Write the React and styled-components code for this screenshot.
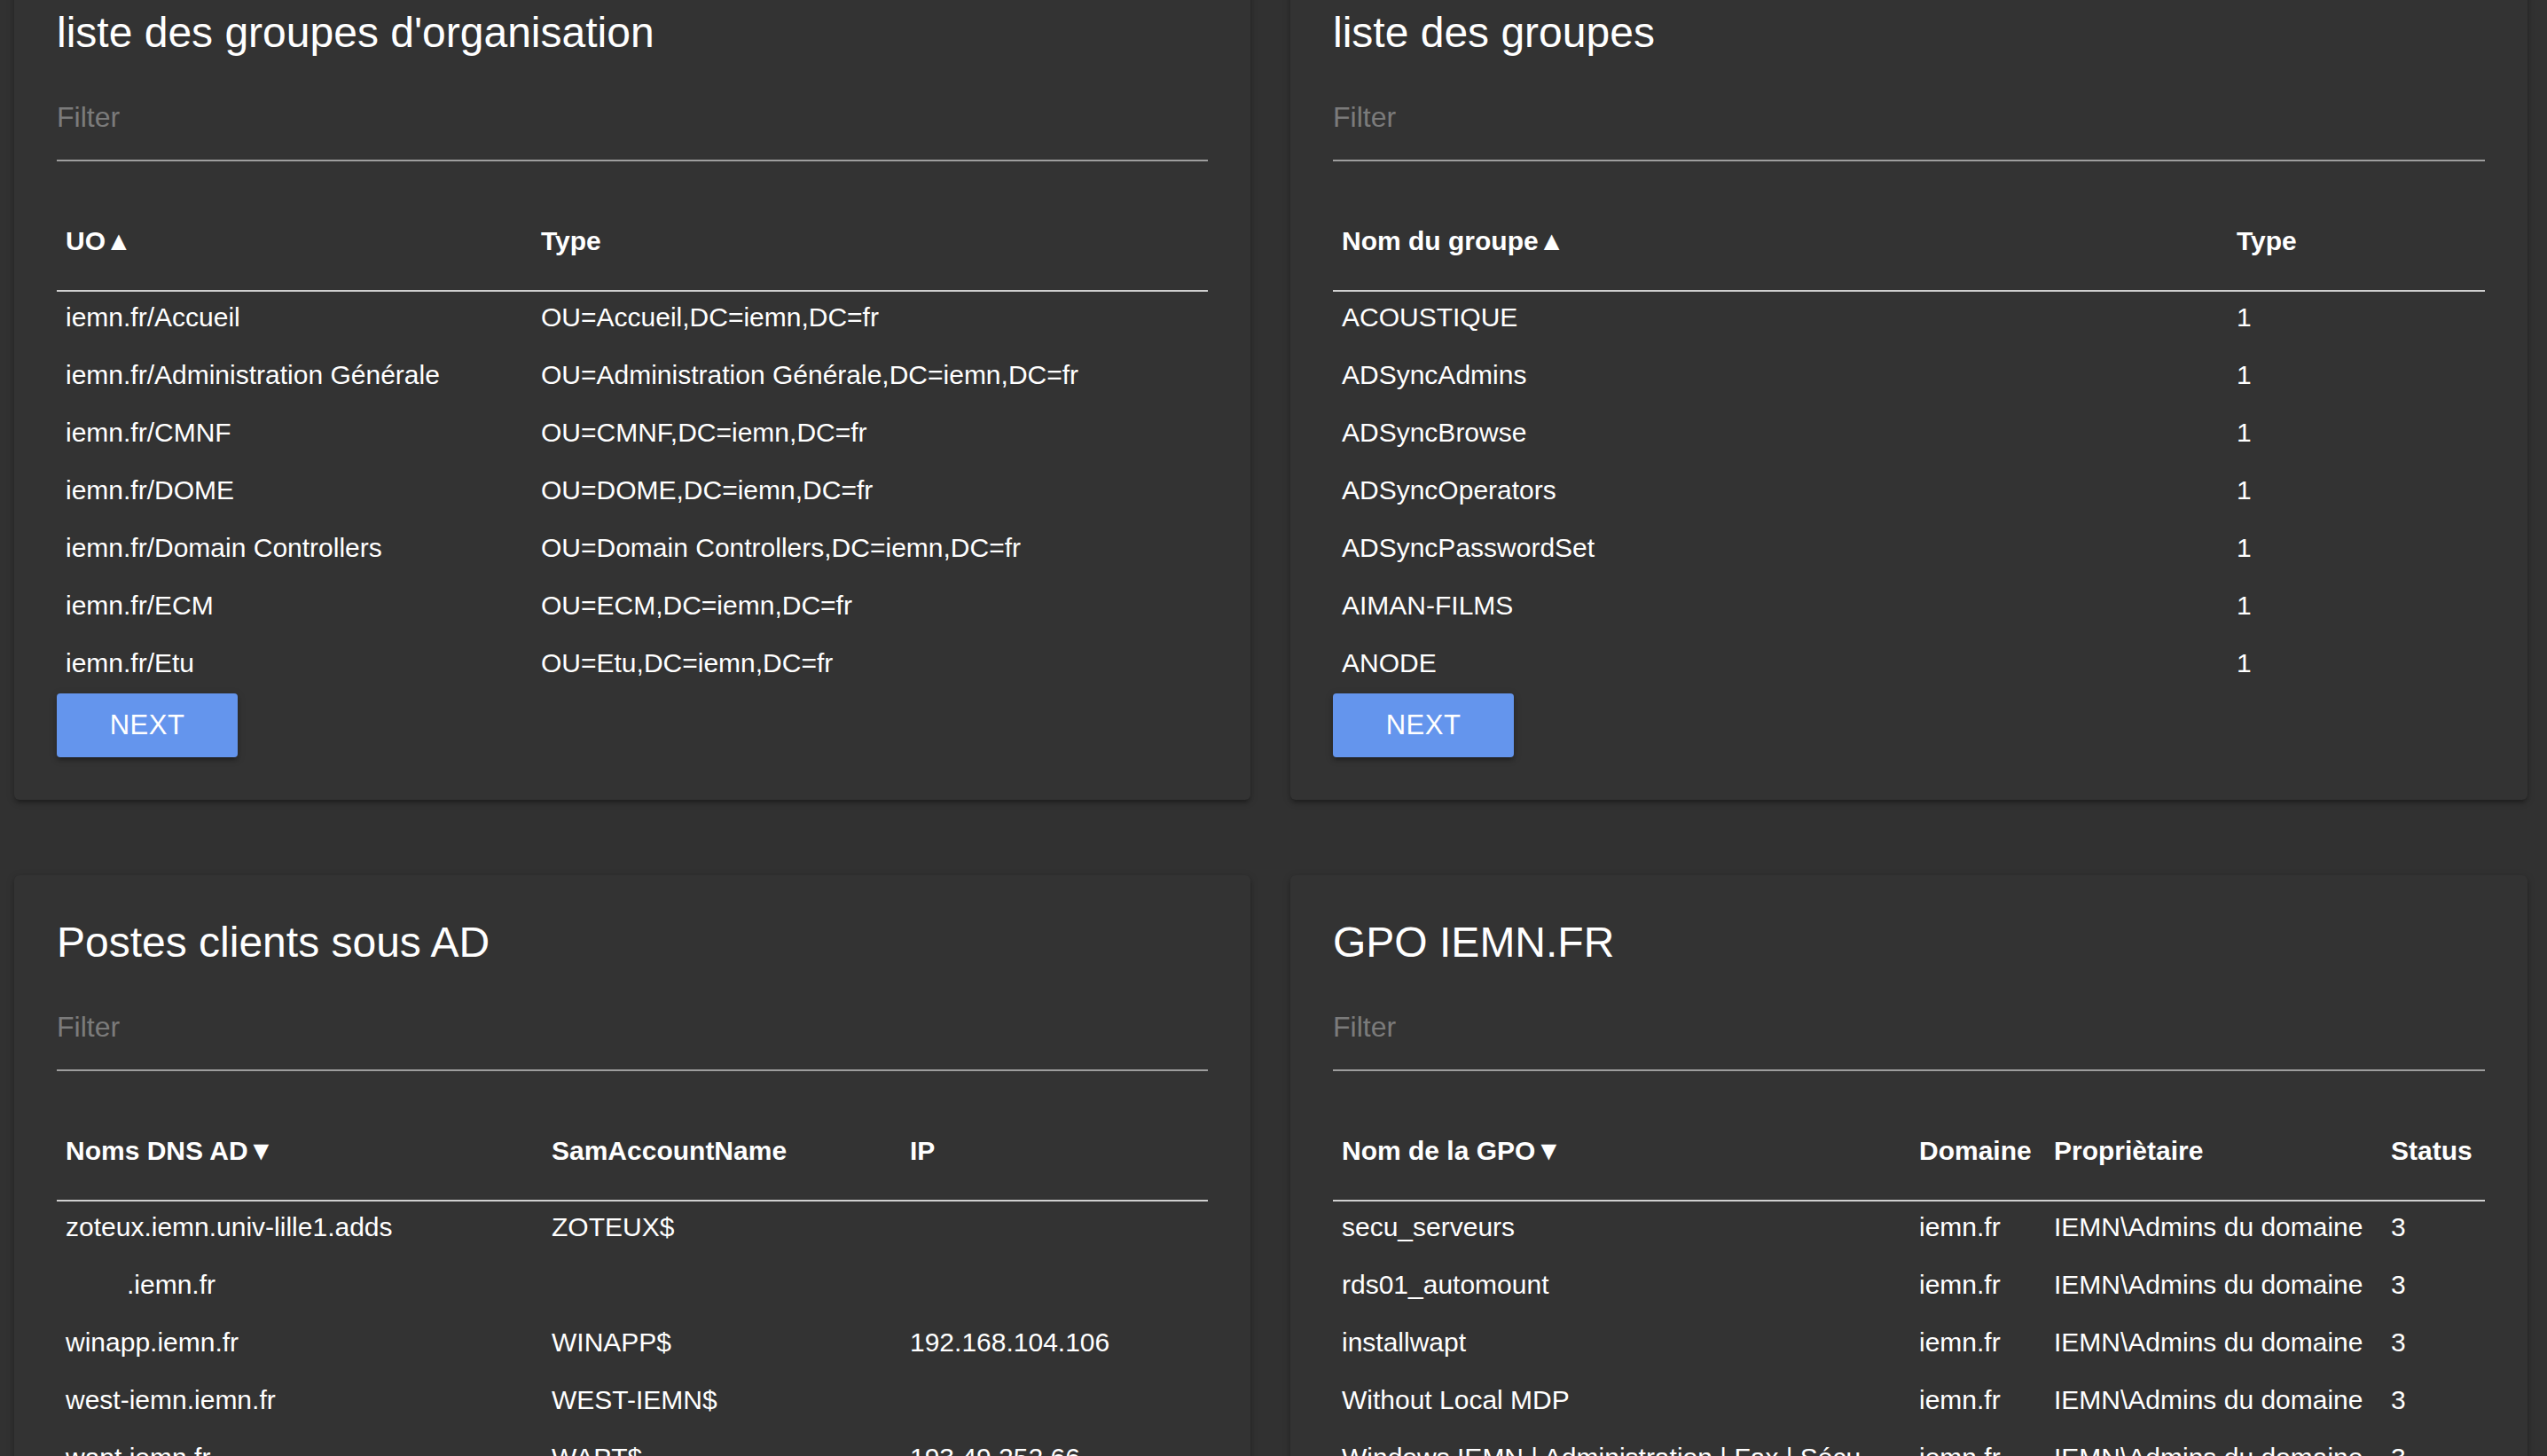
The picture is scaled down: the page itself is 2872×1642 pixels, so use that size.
import React from "react";
import styled, { createGlobalStyle } from "styled-components";

const GlobalStyle = createGlobalStyle`
  html, body {
    margin: 0;
    padding: 0;
    background: #313131;
    font-family: "Liberation Sans", Arial, Helvetica, sans-serif;
    color: #ffffff;
    overflow: hidden;
  }
  * { box-sizing: border-box; }
`;

const Page = styled.main`
  display: grid;
  grid-template-columns: 1394px 1395px;
  column-gap: 45px;
  row-gap: 85px;
  padding: 0 22px 0 16px;
  margin-top: -39px;
  align-items: start;
`;

const Card = styled.section`
  background: #333333;
  border-radius: 6px;
  padding: 44px 48px 48px 48px;
  box-shadow: 0 4px 4px 0 rgba(0, 0, 0, 0.14), 0 6px 2px -4px rgba(0, 0, 0, 0.12),
    0 2px 10px 0 rgba(0, 0, 0, 0.2);
`;

const CardTitle = styled.h2`
  margin: 0 0 15px 0;
  font-size: 48px;
  line-height: 64px;
  font-weight: 300;
  color: #ffffff;
`;

const FilterInput = styled.input`
  display: block;
  width: 100%;
  height: 98px;
  margin: 0;
  padding: 0;
  border: none;
  border-bottom: 2px solid #9e9e9e;
  background: transparent;
  color: #ffffff;
  font-family: inherit;
  font-size: 32px;
  outline: none;
  &::placeholder {
    color: #7b7b7b;
  }
`;

const Table = styled.table`
  width: 100%;
  margin-top: 40px;
  border-collapse: collapse;
  table-layout: fixed;
  font-size: 30px;
`;

const HeadCell = styled.th`
  width: ${(p) => (p.$w ? `${p.$w}px` : "auto")};
  text-align: left;
  font-weight: 700;
  padding: 27px 10px 33px 10px;
  line-height: 45px;
  border-bottom: 2px solid #d0d0d0;
  color: #ffffff;
  white-space: nowrap;
`;

const Cell = styled.td`
  padding: 6px 10px 14px ${(p) => (p.$indent ? "79px" : "10px")};
  line-height: 45px;
  color: #ffffff;
  vertical-align: top;
`;

const Row = styled.tr``;

const NextButton = styled.button`
  display: block;
  width: 204px;
  height: 72px;
  margin-top: -2px;
  border: none;
  border-radius: 4px;
  background: #6495ed;
  color: #ffffff;
  font-family: inherit;
  font-size: 31px;
  letter-spacing: 0.5px;
  text-transform: uppercase;
  line-height: 70px;
  padding: 0;
  box-shadow: 0 4px 4px 0 rgba(0, 0, 0, 0.14), 0 6px 2px -4px rgba(0, 0, 0, 0.12),
    0 2px 10px 0 rgba(0, 0, 0, 0.2);
  cursor: pointer;
`;

const ouRows = [
  ["iemn.fr/Accueil", "OU=Accueil,DC=iemn,DC=fr"],
  ["iemn.fr/Administration Générale", "OU=Administration Générale,DC=iemn,DC=fr"],
  ["iemn.fr/CMNF", "OU=CMNF,DC=iemn,DC=fr"],
  ["iemn.fr/DOME", "OU=DOME,DC=iemn,DC=fr"],
  ["iemn.fr/Domain Controllers", "OU=Domain Controllers,DC=iemn,DC=fr"],
  ["iemn.fr/ECM", "OU=ECM,DC=iemn,DC=fr"],
  ["iemn.fr/Etu", "OU=Etu,DC=iemn,DC=fr"],
];

const groupRows = [
  ["ACOUSTIQUE", "1"],
  ["ADSyncAdmins", "1"],
  ["ADSyncBrowse", "1"],
  ["ADSyncOperators", "1"],
  ["ADSyncPasswordSet", "1"],
  ["AIMAN-FILMS", "1"],
  ["ANODE", "1"],
];

const hostRows = [
  { cells: ["zoteux.iemn.univ-lille1.adds", "ZOTEUX$", ""] },
  { cells: [".iemn.fr", "", ""], indent: true },
  { cells: ["winapp.iemn.fr", "WINAPP$", "192.168.104.106"] },
  { cells: ["west-iemn.iemn.fr", "WEST-IEMN$", ""] },
  { cells: ["wapt.iemn.fr", "WAPT$", "193.49.252.66"] },
  { cells: ["vm-test.iemn.fr", "VM-TEST$", ""] },
];

const gpoRows = [
  ["secu_serveurs", "iemn.fr", "IEMN\\Admins du domaine", "3"],
  ["rds01_automount", "iemn.fr", "IEMN\\Admins du domaine", "3"],
  ["installwapt", "iemn.fr", "IEMN\\Admins du domaine", "3"],
  ["Without Local MDP", "iemn.fr", "IEMN\\Admins du domaine", "3"],
  ["Windows IEMN | Administration | Fax | Sécu", "iemn.fr", "IEMN\\Admins du domaine", "3"],
];

function DataCard({ title, columns, rows, withNext }) {
  return (
    <Card>
      <CardTitle>{title}</CardTitle>
      <FilterInput placeholder="Filter" />
      <Table>
        <thead>
          <Row>
            {columns.map((c, i) => (
              <HeadCell key={i} $w={c.w}>
                {c.label}
              </HeadCell>
            ))}
          </Row>
        </thead>
        <tbody>
          {rows.map((r, i) => {
            const cells = Array.isArray(r) ? r : r.cells;
            return (
              <Row key={i}>
                {cells.map((v, j) => (
                  <Cell key={j} $indent={j === 0 && r.indent}>
                    {v}
                  </Cell>
                ))}
              </Row>
            );
          })}
        </tbody>
      </Table>
      {withNext && <NextButton>Next</NextButton>}
    </Card>
  );
}

export default function App() {
  return (
    <>
      <GlobalStyle />
      <Page>
        <DataCard
          title="liste des groupes d'organisation"
          columns={[{ label: "UO▲", w: 536 }, { label: "Type" }]}
          rows={ouRows}
          withNext
        />
        <DataCard
          title="liste des groupes"
          columns={[{ label: "Nom du groupe▲", w: 1009 }, { label: "Type" }]}
          rows={groupRows}
          withNext
        />
        <DataCard
          title="Postes clients sous AD"
          columns={[
            { label: "Noms DNS AD▼", w: 548 },
            { label: "SamAccountName", w: 404 },
            { label: "IP" },
          ]}
          rows={hostRows}
          withNext
        />
        <DataCard
          title="GPO IEMN.FR"
          columns={[
            { label: "Nom de la GPO▼", w: 651 },
            { label: "Domaine", w: 152 },
            { label: "Propriètaire", w: 380 },
            { label: "Status" },
          ]}
          rows={gpoRows}
          withNext
        />
      </Page>
    </>
  );
}
